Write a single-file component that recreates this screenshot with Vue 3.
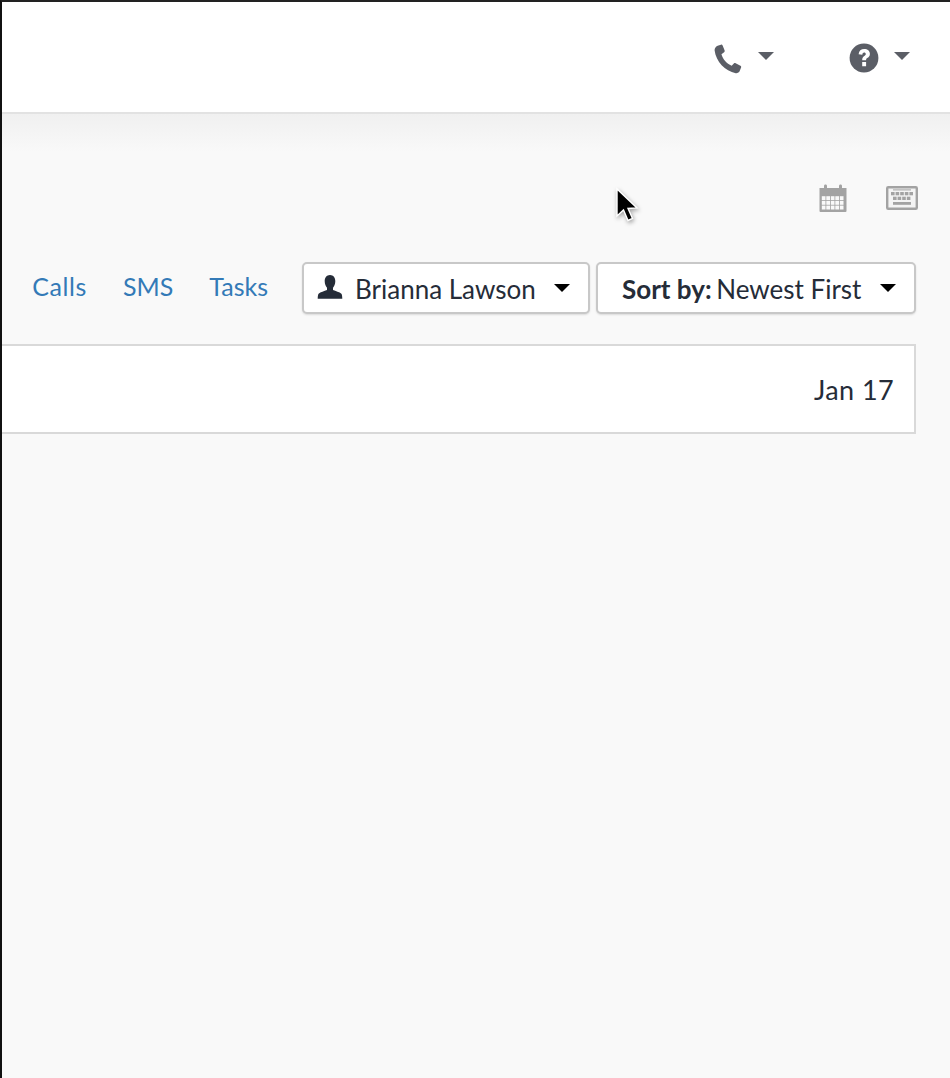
<script setup>
const links = ['Calls', 'SMS', 'Tasks']
const calendarCells = []
for (let r = 0; r < 3; r++) for (let c = 0; c < 5; c++) calendarCells.push({ x: 2.8 + c * 4.5, y: 12.2 + r * 4.7 })
const keyRows = [
  { y: 6, xs: [5, 9.6, 14.2, 18.8, 23.4] },
  { y: 10.7, xs: [7, 11.6, 16.2, 20.8] },
]
</script>

<template>
  <div class="page">
    <header class="topbar">
      <div class="top-item phone">
        <svg class="phone-icon" viewBox="0 0 30 30" width="32" height="32" aria-hidden="true">
          <path d="M6.2 1.6 L9.3 0.6 C10 0.4 10.6 0.8 10.9 1.4 L12.8 6.2 C13 6.8 12.8 7.4 12.3 7.8 L9.8 9.6 C11 14 14.6 18.4 19.4 20.4 L21.4 18.3 C21.9 17.8 22.5 17.7 23.1 18 L27.6 20.4 C28.2 20.8 28.5 21.4 28.2 22 L26.9 25.4 C26.3 26.8 24.8 27.6 23.2 27.4 C13.2 25.8 4.6 16.2 3.4 6.2 C3.2 4.2 4.4 2.4 6.2 1.6 Z" fill="#5b5e66"/>
        </svg>
        <span class="caret grey"></span>
      </div>
      <div class="top-item help">
        <svg class="help-icon" viewBox="0 0 30 30" width="30" height="30" aria-hidden="true">
          <circle cx="15" cy="15" r="14.4" fill="#5b5e66"/>
          <path d="M9.6 11.2 C9.9 7.8 12.1 6 15.2 6 C18.5 6 20.9 8 20.9 10.9 C20.9 13 19.6 14.1 18.2 15.1 C17.3 15.7 17.1 16.1 17.1 17.2 L13.2 17.2 C13.1 15 13.9 14 15.3 13 C16.3 12.3 16.8 11.9 16.8 11.1 C16.8 10.2 16.1 9.6 15.2 9.6 C14.1 9.6 13.5 10.3 13.3 11.7 Z M13.2 19 L17.1 19 L17.1 23.2 L13.2 23.2 Z" fill="#fff"/>
        </svg>
        <span class="caret grey"></span>
      </div>
    </header>

    <main class="content">
      <div class="tools">
        <svg class="tool-cal" viewBox="0 0 28 28" width="28" height="28" aria-hidden="true">
          <path d="M1 4 H5 V2 Q5 0.5 6 0.5 H7 Q8 0.5 8 2 V4 H20 V2 Q20 0.5 21 0.5 H22 Q23 0.5 23 2 V4 H27.5 V27 Q27.5 28 26.5 28 H1.5 Q0.5 28 0.5 27 V4 Z" fill="#a3a3a3"/>
          <rect v-for="(cell, i) in calendarCells" :key="i" :x="cell.x" :y="cell.y" width="3.7" height="3.9" fill="#f9f9f9"/>
        </svg>
        <svg class="tool-key" viewBox="0 0 32 24" width="32" height="24" aria-hidden="true">
          <rect x="1.2" y="1.2" width="29.6" height="21.6" rx="1" fill="#f4f4f4" stroke="#a3a3a3" stroke-width="2.4"/>
          <rect x="7" y="3.4" width="18" height="1" fill="#a3a3a3"/>
          <template v-for="(row, r) in keyRows" :key="r">
            <rect v-for="x in row.xs" :key="x" :x="x" :y="row.y" width="3.6" height="3.3" fill="#a3a3a3"/>
          </template>
          <rect x="7" y="16" width="18" height="2.8" fill="#a3a3a3"/>
        </svg>
      </div>

      <div class="filters">
        <nav class="links">
          <a v-for="link in links" :key="link" class="link" :class="{ wide: link === 'Calls' }">{{ link }}</a>
        </nav>
        <button class="btn person">
          <svg class="user" viewBox="0 0 26 24" width="26" height="24" aria-hidden="true">
            <path d="M13 0 C16.4 0 18.3 2.8 18.3 6.2 C18.3 9 17.2 11.4 16 12.8 L16 15 C18.6 16.2 22.6 17 24.4 18.8 C25 19.6 25.3 21.8 25.3 23.7 L0.7 23.7 C0.7 21.8 1 19.6 1.6 18.8 C3.4 17 7.4 16.2 10 15 L10 12.8 C8.8 11.4 7.7 9 7.7 6.2 C7.7 2.8 9.6 0 13 0 Z" fill="#252c38"/>
          </svg>
          <span class="label">Brianna Lawson</span>
          <span class="caret dark"></span>
        </button>
        <button class="btn sort">
          <span class="label"><b>Sort by:</b> Newest First</span>
          <span class="caret dark"></span>
        </button>
      </div>

      <section class="card">
        <span class="date">Jan 17</span>
      </section>
    </main>

    <svg class="cursor" viewBox="0 0 28 40" width="28" height="40" aria-hidden="true">
      <path d="M3 2 L3 29 L9.5 23 L14 33.5 L18.5 31.5 L14 21.5 L23 21 Z" fill="#000" stroke="#fff" stroke-width="1.4"/>
    </svg>
  </div>
</template>

<style>
html, body { margin: 0; background: #f9f9f9; }
</style>

<style scoped>
.page {
  position: relative;
  box-sizing: border-box;
  width: 950px;
  height: 1078px;
  overflow: hidden;
  border-left: 2px solid #111;
  border-top: 2px solid #222;
  background: #f9f9f9;
  font-family: Lato, "Open Sans", sans-serif;
  color: #252c38;
}
.topbar {
  box-sizing: border-box;
  height: 112px;
  background: #fff;
  border-bottom: 2px solid #e2e2e2;
  display: flex;
  justify-content: flex-end;
  align-items: flex-start;
  padding: 41px 40px 0 0;
  gap: 75px;
}
.top-item {
  display: flex;
  align-items: center;
  gap: 15px;
  height: 30px;
}
.phone-icon, .help-icon { display: block; }
.phone-icon { margin-top: 3px; }
.caret {
  display: block;
  width: 0;
  height: 0;
  border-left: 8px solid transparent;
  border-right: 8px solid transparent;
}
.caret.grey { border-top: 8px solid #5b5e66; margin-top: -5px; }
.caret.dark { border-top: 8px solid #000; }
.content {
  background: linear-gradient(#f0f0f0 0, #f9f9f9 38px);
  height: 964px;
  padding: 69px 34px 0 0;
  box-sizing: border-box;
}
.tools {
  display: flex;
  justify-content: flex-end;
  align-items: center;
  gap: 39px;
  height: 30px;
  margin-right: -2px;
}
.filters {
  display: flex;
  justify-content: flex-end;
  align-items: center;
  margin-top: 49px;
  height: 52px;
}
.links {
  display: flex;
  gap: 36px;
  margin-right: 34px;
}
.link {
  color: #337ab7;
  font-size: 25px;
  line-height: 30px;
  margin-top: -5px;
}
.link.wide { letter-spacing: 0.6px; }
.btn {
  box-sizing: border-box;
  height: 52px;
  display: flex;
  align-items: center;
  background: #fff;
  border: 2px solid #c8c8c8;
  border-radius: 5px;
  box-shadow: 0 1px 2px rgba(0, 0, 0, 0.12);
  font: inherit;
  font-size: 26px;
  color: #252c38;
  padding: 0;
}
.btn .label { padding-top: 2px; }
.user { margin-top: -2px; }
.person { width: 288px; padding-left: 13px; }
.person .label { margin-left: 12px; margin-right: 18px; }
.sort { width: 320px; margin-left: 6px; padding-left: 24px; }
.sort .label { margin-right: 19px; }
.sort b { font-weight: 700; margin-right: -2px; }
.card {
  box-sizing: border-box;
  height: 90px;
  margin-top: 30px;
  background: #fff;
  border: 2px solid #d9d9d9;
  border-left: 0;
  display: flex;
  justify-content: flex-end;
  align-items: center;
  padding-right: 20px;
}
.date { font-size: 27px; letter-spacing: 0.4px; }
.cursor {
  position: absolute;
  left: 612px;
  top: 185px;
  filter: drop-shadow(1px 2px 2px rgba(0, 0, 0, 0.35));
}
</style>
